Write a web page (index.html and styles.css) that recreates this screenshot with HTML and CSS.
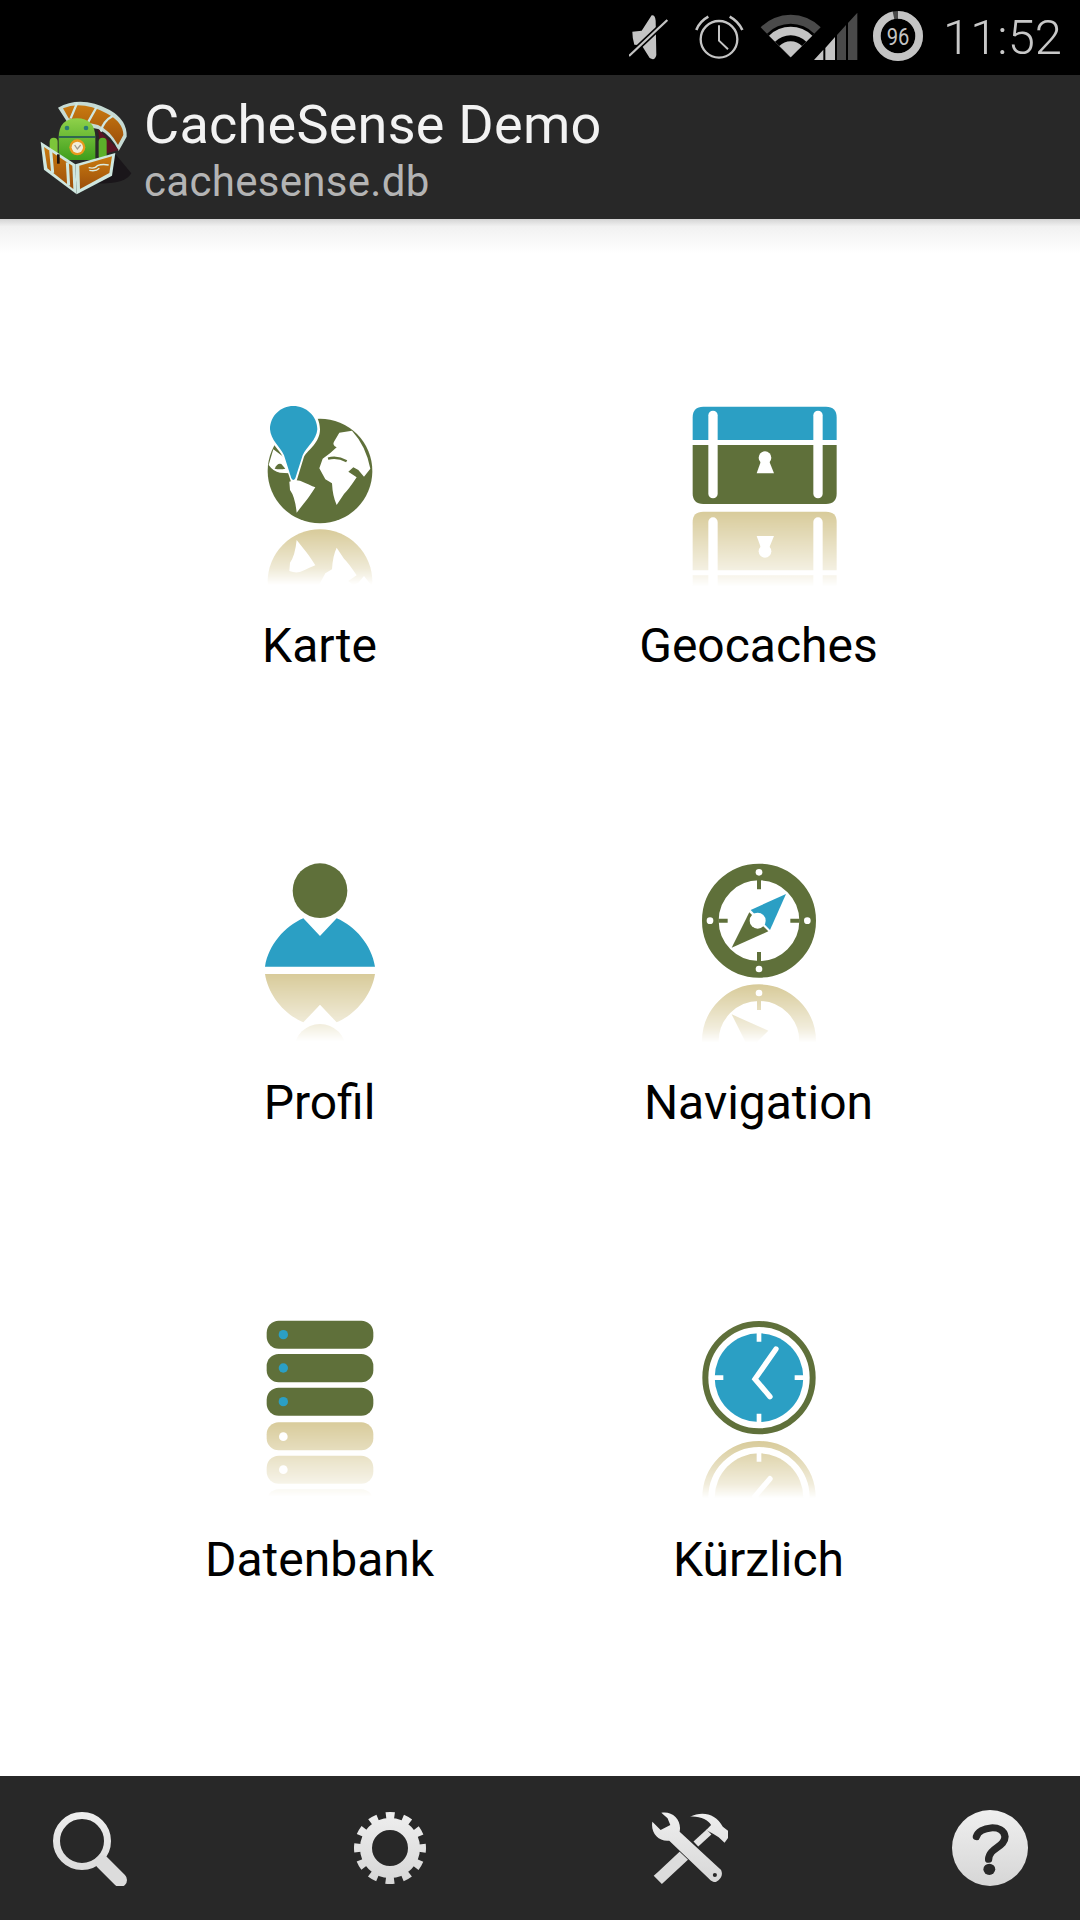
FILE: index.html
```html
<!DOCTYPE html>
<html lang="de">
<head>
<meta charset="utf-8">
<title>CacheSense Demo</title>
<link rel="stylesheet" href="styles.css">
</head>
<body>
<div class="screen">
  <header class="status-bar">
    <svg class="status-icons" viewBox="90 0 885 225" aria-hidden="true">
      <!-- mute -->
      <path d="M100 95 L128 92 L158 46 Q168 44 170 62 L172 165 Q168 184 152 174 L128 136 L106 134 Q100 115 100 95Z" fill="#c4c4c4"/>
      <path d="M90 168 L205 60" stroke="#000" stroke-width="16"/>
      <path d="M90 168 L205 60" stroke="#c4c4c4" stroke-width="7"/>
      <!-- alarm -->
      <circle cx="360" cy="118" r="55" fill="none" stroke="#c4c4c4" stroke-width="7"/>
      <path d="M360 76 V122 L387 148" fill="none" stroke="#c4c4c4" stroke-width="6"/>
      <path d="M292 90 Q302 64 328 50 M392 50 Q418 64 430 90" fill="none" stroke="#c4c4c4" stroke-width="8"/>
      <!-- wifi -->
      <path d="M575 172 L485 82 A127 127 0 0 1 665 82Z" fill="#4a4a4a"/>
      <path d="M575 172 L504 101 A100 100 0 0 1 646 101Z" fill="#000"/>
      <path d="M575 172 L510 107 A92 92 0 0 1 640 107Z" fill="#c4c4c4"/>
      <path d="M575 172 L528 125 A67 67 0 0 1 622 125Z" fill="#000"/>
      <path d="M575 172 L541 138 A48 48 0 0 1 609 138Z" fill="#c4c4c4"/>
      <!-- signal -->
      <path d="M645 180 L673 149 V180Z M679 144 L708 111 V180 H679Z" fill="#c4c4c4"/>
      <path d="M714 105 L741 75 V180 H714Z M747 69 L775 38 V180 H747Z" fill="#4a4a4a"/>
      <!-- battery -->
      <circle cx="897" cy="108" r="63.5" fill="none" stroke="#4a4a4a" stroke-width="23"/>
      <circle cx="897" cy="108" r="63.5" fill="none" stroke="#c4c4c4" stroke-width="23" pathLength="100" stroke-dasharray="96 4" transform="rotate(-90 897 108)"/>
      <text class="battery-text" x="897" y="134" textLength="68" lengthAdjust="spacingAndGlyphs">96</text>
    </svg>
    <span class="clock">11:52</span>
  </header>

  <div class="app-bar">
    <svg class="logo" viewBox="0 6 378 360" aria-hidden="true">
      <defs>
        <linearGradient id="lg-wood" x1="0" y1="0" x2="0" y2="1"><stop offset="0" stop-color="#c97a10"/><stop offset="1" stop-color="#9c4f0a"/></linearGradient>
        <linearGradient id="lg-droid" x1="0" y1="0" x2="0" y2="1"><stop offset="0" stop-color="#8fd14a"/><stop offset="1" stop-color="#3f9e1c"/></linearGradient>
      </defs>
      <path d="M290 205 L340 265 Q320 300 230 295Z" fill="#1a161a"/>
      <path d="M120 68 Q190 30 275 75 Q328 105 326 155 L302 198 Q280 150 240 132 L150 115Z" fill="#c6dbd4"/>
      <path d="M135 70 Q192 46 268 86 Q316 112 316 150 L300 180 Q275 135 240 120 L152 100Z" fill="url(#lg-wood)"/>
      <path d="M178 52 L158 100 M236 66 L210 112 M285 92 Q255 108 248 140" fill="none" stroke="#cfe7e0" stroke-width="7"/>
      <path d="M240 132 L302 195 L250 210Z" fill="#5a1424"/>
      <rect x="95" y="158" width="24" height="60" rx="12" fill="#7cc63a"/>
      <rect x="242" y="158" width="24" height="66" rx="12" fill="#5cb02a"/>
      <path d="M122 156 Q124 100 177 100 Q230 100 232 156 V225 H122Z" fill="url(#lg-droid)"/>
      <path d="M122 156 H232" stroke="#1c4a5a" stroke-width="5"/>
      <circle cx="147" cy="129" r="7" fill="#2c7c74"/><circle cx="204" cy="129" r="7" fill="#2c7c74"/>
      <circle cx="178" cy="187" r="24" fill="#e89a1c"/><circle cx="178" cy="187" r="17" fill="#f2edd8"/>
      <path d="M170 180 L178 192 L188 180" fill="none" stroke="#a09a8c" stroke-width="4"/>
      <path d="M68 170 L172 238 L176 328 L78 254Z" fill="#cfe7e0"/>
      <path d="M172 238 L292 204 L282 272 L176 328Z" fill="#cfe7e0"/>
      <path d="M78 186 L163 242 L166 312 L88 250Z" fill="url(#lg-wood)"/>
      <path d="M184 242 L282 214 L274 264 L186 312Z" fill="url(#lg-wood)"/>
      <path d="M98 196 L104 264 M148 232 L152 302" stroke="#cfe7e0" stroke-width="9"/>
      <path d="M121 208 V236" stroke="#20140e" stroke-width="8"/>
      <path d="M212 248 Q232 252 238 242 Q252 236 272 240 M214 256 Q234 260 244 250" fill="none" stroke="#dcecdf" stroke-width="4"/>
    </svg>
    <div class="app-titles">
      <div class="app-title">CacheSense Demo</div>
      <div class="app-subtitle">cachesense.db</div>
    </div>
  </div>

  <main class="menu">
    <div class="menu-grid">
      <a class="menu-item">
        <svg class="menu-icon" viewBox="0 9 480 600" aria-hidden="true">
          <defs>
            <linearGradient id="f1" gradientUnits="userSpaceOnUse" x1="0" y1="418" x2="0" y2="585"><stop offset="0" stop-color="#fff"/><stop offset="0.7" stop-color="#fff" stop-opacity="0.4"/><stop offset="1" stop-color="#fff" stop-opacity="0"/></linearGradient>
            <mask id="m1" maskUnits="userSpaceOnUse" x="0" y="405" width="480" height="205"><rect x="0" y="405" width="480" height="205" fill="url(#f1)"/></mask>
          </defs>
          <circle cx="240" cy="243" r="157" fill="#5f703a"/>
          <path d="M282 155 L298 128 L336 122 Q378 168 391 236 L372 260 L355 240 L340 232 L325 245 L350 262 Q325 300 312 312 L290 345 Q278 320 276 280 L256 268 L238 235 L248 206 L270 190 L290 172 Q276 165 282 155Z" fill="#fff"/>
          <path d="M264 206 Q292 198 320 214" fill="none" stroke="#5f703a" stroke-width="7"/>
          <path d="M148 275 Q165 268 180 272 Q210 285 226 292 Q205 325 192 340 L170 368 Q165 320 150 300Z" fill="#fff"/>
          <path d="M100 178 Q92 205 86 225 Q100 245 120 248 L148 250 L130 200Z" fill="#fff"/>
          <path d="M104 236 Q112 218 124 222 L136 236 Q120 240 104 236Z" fill="#5f703a"/>
          <path d="M160 38 C118 38 80 72 84 122 C88 158 118 178 128 200 L152 272 Q160 284 170 272 L192 200 C206 178 240 158 240 118 C240 72 202 38 160 38Z" fill="#fff"/>
          <path d="M160 48 C122 48 90 78 90 118 C92 150 120 170 132 196 L154 265 Q160 275 166 265 L188 196 C200 170 230 150 232 118 C232 78 198 48 160 48Z" fill="#2b9fc4"/>
          <g mask="url(#m1)">
            <g transform="matrix(1 0 0 -1 0 818)">
              <circle cx="240" cy="243" r="157" fill="#d8cb9a"/>
              <path d="M282 155 L298 128 L336 122 Q378 168 391 236 L372 260 L355 240 L340 232 L325 245 L350 262 Q325 300 312 312 L290 345 Q278 320 276 280 L256 268 L238 235 L248 206 L270 190 L290 172 Q276 165 282 155Z" fill="#fff"/>
              <path d="M148 275 Q165 268 180 272 Q210 285 226 292 Q205 325 192 340 L170 368 Q165 320 150 300Z" fill="#fff"/>
            </g>
          </g>
        </svg>
        <span class="menu-label">Karte</span>
      </a>

      <a class="menu-item">
        <svg class="menu-icon" viewBox="27 9 480 600" aria-hidden="true">
          <defs>
            <linearGradient id="f2" gradientUnits="userSpaceOnUse" x1="0" y1="365" x2="0" y2="590"><stop offset="0" stop-color="#fff"/><stop offset="0.8" stop-color="#fff" stop-opacity="0.27"/><stop offset="1" stop-color="#fff" stop-opacity="0"/></linearGradient>
            <mask id="m2" maskUnits="userSpaceOnUse" x="27" y="360" width="480" height="250"><rect x="27" y="360" width="480" height="250" fill="url(#f2)"/></mask>
          </defs>
          <path d="M68 150 V82 Q68 50 100 50 H468 Q500 50 500 82 V150Z" fill="#2b9fc4"/>
          <path d="M68 165 H500 V310 Q500 342 468 342 H100 Q68 342 68 310Z" fill="#5f703a"/>
          <rect x="115" y="62" width="28" height="263" rx="14" fill="#fff"/>
          <rect x="430" y="62" width="28" height="263" rx="14" fill="#fff"/>
          <circle cx="285" cy="203" r="19" fill="#fff"/>
          <path d="M276 205 H294 L312 250 H260Z" fill="#fff"/>
          <g mask="url(#m2)">
            <path d="M68 541 V396 Q68 365 100 365 H468 Q500 365 500 396 V541Z" fill="#d8cb9a"/>
            <path d="M68 556 H500 V624 H68Z" fill="#d8cb9a"/>
            <rect x="115" y="382" width="28" height="263" rx="14" fill="#fff"/>
            <rect x="430" y="382" width="28" height="263" rx="14" fill="#fff"/>
            <circle cx="285" cy="484" r="19" fill="#fff"/>
            <path d="M276 482 H294 L312 438 H260Z" fill="#fff"/>
          </g>
        </svg>
        <span class="menu-label">Geocaches</span>
      </a>

      <a class="menu-item">
        <svg class="menu-icon" viewBox="0 0 480 600" aria-hidden="true">
          <defs>
            <linearGradient id="f3" gradientUnits="userSpaceOnUse" x1="0" y1="372" x2="0" y2="575"><stop offset="0" stop-color="#fff"/><stop offset="0.7" stop-color="#fff" stop-opacity="0.4"/><stop offset="1" stop-color="#fff" stop-opacity="0"/></linearGradient>
            <mask id="m3" maskUnits="userSpaceOnUse" x="0" y="365" width="480" height="235"><rect x="0" y="365" width="480" height="235" fill="url(#f3)"/></mask>
          </defs>
          <circle cx="240" cy="122" r="82" fill="#5f703a"/>
          <path d="M75 350 C85 285 135 228 190 205 L240 258 L290 205 C345 228 395 285 405 350Z" fill="#2b9fc4"/>
          <g mask="url(#m3)">
            <path d="M75 372 C85 437 135 494 190 517 L240 464 L290 517 C345 494 395 437 405 372Z" fill="#d8cb9a"/>
            <circle cx="240" cy="600" r="78" fill="#d8cb9a"/>
          </g>
        </svg>
        <span class="menu-label">Profil</span>
      </a>

      <a class="menu-item">
        <svg class="menu-icon" viewBox="-3 0 480 600" aria-hidden="true">
          <defs>
            <linearGradient id="f4" gradientUnits="userSpaceOnUse" x1="0" y1="405" x2="0" y2="578"><stop offset="0" stop-color="#fff"/><stop offset="0.75" stop-color="#fff" stop-opacity="0.35"/><stop offset="1" stop-color="#fff" stop-opacity="0"/></linearGradient>
            <mask id="m4" maskUnits="userSpaceOnUse" x="-3" y="395" width="480" height="205"><rect x="-3" y="395" width="480" height="205" fill="url(#f4)"/></mask>
          </defs>
          <circle cx="237" cy="212" r="146" fill="none" stroke="#5f703a" stroke-width="50"/>
          <path d="M237 90 V118 M237 306 V334 M115 212 H143 M331 212 H359" stroke="#5f703a" stroke-width="12"/>
          <circle cx="237" cy="67" r="10" fill="#fff"/><circle cx="237" cy="357" r="10" fill="#fff"/><circle cx="90" cy="212" r="10" fill="#fff"/><circle cx="382" cy="212" r="10" fill="#fff"/>
          <path d="M318 132 L212 180 L270 240Z" fill="#2b9fc4"/>
          <path d="M155 293 L208 187 L265 244Z" fill="#5f703a"/>
          <circle cx="233" cy="212" r="24" fill="#fff"/>
          <g mask="url(#m4)">
            <g transform="matrix(1 0 0 -1 0 786)">
              <circle cx="237" cy="212" r="146" fill="none" stroke="#d8cb9a" stroke-width="50"/>
              <path d="M237 306 V334" stroke="#d8cb9a" stroke-width="12"/>
              <circle cx="237" cy="357" r="10" fill="#fff"/>
              <path d="M155 293 L208 187 L265 244Z" fill="#d8cb9a"/>
            </g>
          </g>
        </svg>
        <span class="menu-label">Navigation</span>
      </a>

      <a class="menu-item">
        <svg class="menu-icon" viewBox="0 6 480 600" aria-hidden="true">
          <defs>
            <linearGradient id="f5" gradientUnits="userSpaceOnUse" x1="0" y1="350" x2="0" y2="575"><stop offset="0" stop-color="#fff"/><stop offset="0.8" stop-color="#fff" stop-opacity="0.25"/><stop offset="1" stop-color="#fff" stop-opacity="0"/></linearGradient>
            <mask id="m5" maskUnits="userSpaceOnUse" x="0" y="345" width="480" height="260"><rect x="0" y="345" width="480" height="260" fill="url(#f5)"/></mask>
          </defs>
          <rect x="80" y="47" width="320" height="84" rx="36" fill="#5f703a"/>
          <rect x="80" y="147" width="320" height="85" rx="36" fill="#5f703a"/>
          <rect x="80" y="248" width="320" height="84" rx="36" fill="#5f703a"/>
          <circle cx="130" cy="89" r="14" fill="#2b9fc4"/><circle cx="130" cy="189" r="14" fill="#2b9fc4"/><circle cx="130" cy="290" r="14" fill="#2b9fc4"/>
          <g mask="url(#m5)">
            <rect x="80" y="352" width="320" height="84" rx="36" fill="#d8cb9a"/>
            <rect x="80" y="452" width="320" height="84" rx="36" fill="#d8cb9a"/>
            <rect x="80" y="553" width="320" height="84" rx="36" fill="#d8cb9a"/>
            <circle cx="130" cy="395" r="13" fill="#fff"/><circle cx="130" cy="494" r="13" fill="#fff"/>
          </g>
        </svg>
        <span class="menu-label">Datenbank</span>
      </a>

      <a class="menu-item">
        <svg class="menu-icon" viewBox="-3 6 480 600" aria-hidden="true">
          <defs>
            <linearGradient id="f6" gradientUnits="userSpaceOnUse" x1="0" y1="408" x2="0" y2="580"><stop offset="0" stop-color="#fff"/><stop offset="0.75" stop-color="#fff" stop-opacity="0.35"/><stop offset="1" stop-color="#fff" stop-opacity="0"/></linearGradient>
            <mask id="m6" maskUnits="userSpaceOnUse" x="-3" y="400" width="480" height="206"><rect x="-3" y="400" width="480" height="206" fill="url(#f6)"/></mask>
          </defs>
          <circle cx="237" cy="218" r="161" fill="none" stroke="#5f703a" stroke-width="18"/>
          <circle cx="237" cy="218" r="133" fill="#2b9fc4"/>
          <path d="M237 82 V110 M237 326 V354 M102 218 H130 M344 218 H372" stroke="#fff" stroke-width="14"/>
          <path d="M288 132 L225 222 L270 275" fill="none" stroke="#fff" stroke-width="16" stroke-linecap="round" stroke-linejoin="miter"/>
          <g mask="url(#m6)">
            <g transform="matrix(1 0 0 -1 0 796)">
              <circle cx="237" cy="218" r="161" fill="none" stroke="#d8cb9a" stroke-width="18"/>
              <circle cx="237" cy="218" r="133" fill="#d8cb9a"/>
              <path d="M237 326 V354" stroke="#fff" stroke-width="14"/>
              <path d="M288 132 L225 222 L270 275" fill="none" stroke="#fff" stroke-width="16" stroke-linecap="round"/>
            </g>
          </g>
        </svg>
        <span class="menu-label">Kürzlich</span>
      </a>
    </div>
  </main>

  <footer class="tool-bar">
    <svg class="tool-icon" viewBox="0 0 76 76" aria-hidden="true">
      <defs>
        <linearGradient id="tg" gradientUnits="userSpaceOnUse" x1="0" y1="0" x2="0" y2="76"><stop offset="0" stop-color="#efefef"/><stop offset="1" stop-color="#d6d6d6"/></linearGradient>
      </defs>
      <circle cx="30" cy="31" r="25.5" fill="none" stroke="url(#tg)" stroke-width="7"/>
      <path d="M50 52 L68 70" stroke="#dcdcdc" stroke-width="14" stroke-linecap="round"/>
    </svg>
    <svg class="tool-icon" viewBox="0 0 76 76" aria-hidden="true">
      <defs>
        <linearGradient id="tg2" gradientUnits="userSpaceOnUse" x1="0" y1="0" x2="0" y2="76"><stop offset="0" stop-color="#efefef"/><stop offset="1" stop-color="#d6d6d6"/></linearGradient>
      </defs>
      <circle cx="38" cy="38" r="24" fill="none" stroke="url(#tg2)" stroke-width="12"/>
      <circle cx="38" cy="38" r="31.5" fill="none" stroke="url(#tg2)" stroke-width="9" stroke-dasharray="8.3 8.19" stroke-dashoffset="4.15"/>
    </svg>
    <svg class="tool-icon" viewBox="325 120 220 228" preserveAspectRatio="none" aria-hidden="true">
      <defs>
        <linearGradient id="tg3" gradientUnits="userSpaceOnUse" x1="0" y1="120" x2="0" y2="348"><stop offset="0" stop-color="#efefef"/><stop offset="1" stop-color="#d6d6d6"/></linearGradient>
      </defs>
      <path d="M354 318 L412 262" stroke="#dcdcdc" stroke-width="34" stroke-linecap="square"/>
      <path d="M452 222 L490 186" stroke="#e4e4e4" stroke-width="20"/>
      <path d="M435 140 C470 122 510 130 530 170 L555 190 L535 218 L518 202 L503 192 L482 180 L496 165 C488 150 465 138 435 140Z" fill="url(#tg3)"/>
      <path d="M352 128 C385 122 412 150 405 185 L525 300 Q534 322 510 336 Q498 336 490 326 L375 212 C345 216 320 190 326 155 L350 180 L378 165 L370 145Z" fill="url(#tg3)" stroke="#282828" stroke-width="5" paint-order="stroke"/>
      <circle cx="507" cy="315" r="6" fill="#282828"/>
    </svg>
    <svg class="tool-icon" viewBox="1198 120 218 228" preserveAspectRatio="none" aria-hidden="true">
      <defs>
        <linearGradient id="tg4" gradientUnits="userSpaceOnUse" x1="0" y1="120" x2="0" y2="348"><stop offset="0" stop-color="#efefef"/><stop offset="1" stop-color="#d6d6d6"/></linearGradient>
      </defs>
      <ellipse cx="1307" cy="234" rx="109" ry="114" fill="url(#tg4)"/>
      <path d="M1268 200 C1275 170 1345 160 1350 200 C1350 232 1305 232 1303 268" fill="none" stroke="#282828" stroke-width="21" stroke-linecap="round"/>
      <circle cx="1305" cy="298" r="17" fill="#282828"/>
    </svg>
  </footer>
</div>
</body>
</html>
```

FILE: styles.css
```css
* { box-sizing: border-box; }

html, body {
  margin: 0;
  padding: 0;
  background: #fff;
}

body {
  font-family: Roboto, "Liberation Sans", sans-serif;
}

.screen {
  width: 1080px;
  height: 1920px;
  display: flex;
  flex-direction: column;
  overflow: hidden;
}

.status-bar {
  height: 75px;
  flex: none;
  background: #000;
  display: flex;
  align-items: center;
  justify-content: flex-end;
  padding-right: 18px;
}

.status-icons {
  width: 295px;
  height: 75px;
  display: block;
}

.battery-text {
  font-family: Roboto, sans-serif;
  font-size: 74px;
  fill: #c4c4c4;
  text-anchor: middle;
}

.clock {
  margin-left: 19px;
  font-size: 49px;
  font-weight: 300;
  color: #c8c8c8;
  line-height: 75px;
}

.app-bar {
  position: relative;
  height: 144px;
  flex: none;
  background: #282828;
  display: flex;
  align-items: center;
  padding-left: 18px;
}

.app-bar::after {
  content: "";
  position: absolute;
  left: 0;
  right: 0;
  top: 100%;
  height: 34px;
  background: linear-gradient(#d4d4d4, #f1f1f1 22%, #ffffff);
}

.logo {
  width: 126px;
  height: 120px;
  flex: none;
}

.app-titles {
  display: flex;
  flex-direction: column;
  padding-top: 13px;
}

.app-title {
  font-size: 54px;
  line-height: 56px;
  letter-spacing: 0.25px;
  color: #f2f2f2;
}

.app-subtitle {
  font-size: 42px;
  line-height: 57px;
  letter-spacing: 0.3px;
  color: #b4b4b4;
}

.menu {
  flex: 1;
  padding: 174px 0 0 100px;
}

.menu-grid {
  display: grid;
  grid-template-columns: 439px 439px;
  grid-auto-rows: 457px;
}

.menu-item {
  display: flex;
  flex-direction: column;
  align-items: center;
}

.menu-icon {
  width: 160px;
  height: 200px;
  display: block;
  flex: none;
}

.menu-label {
  margin-top: 25px;
  font-size: 48px;
  line-height: 56px;
  color: #000;
}

.tool-bar {
  height: 144px;
  flex: none;
  background: #282828;
  display: flex;
  align-items: center;
  justify-content: space-between;
  padding: 0 52px;
}

.tool-icon {
  width: 76px;
  height: 76px;
  display: block;
}
```
